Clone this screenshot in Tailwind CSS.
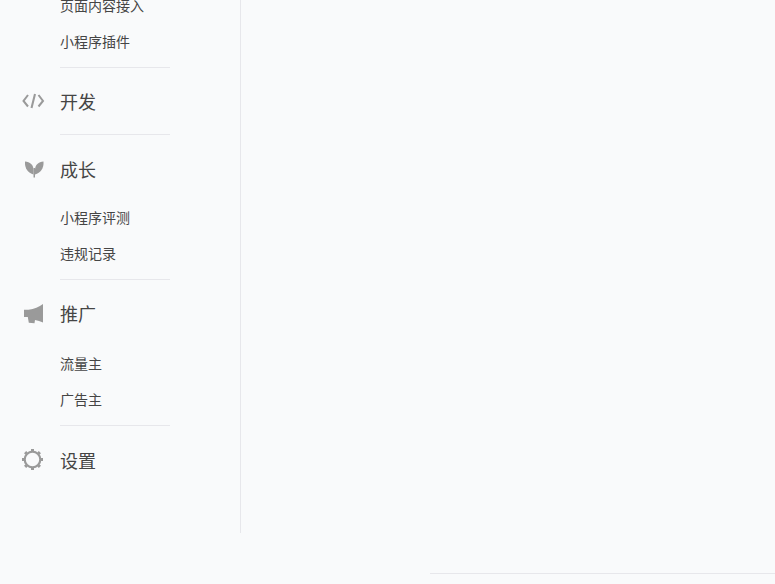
<!DOCTYPE html>
<html lang="zh">
<head>
<meta charset="utf-8">
<script src="https://cdn.jsdelivr.net/npm/@tailwindcss/browser@4"></script>
</head>
<body class="m-0 overflow-hidden bg-[#f9fafb] font-['Liberation_Sans','Noto_Sans_CJK_SC',sans-serif]">
<div class="w-[775px] h-[584px] flex flex-col">
  <aside class="w-[241px] h-[533px] shrink-0 border-r border-[#e7e7eb] flex flex-col justify-end overflow-hidden">
    <section class="shrink-0 pb-[7px]">
      <a class="block pl-[60px] h-[36px] leading-[36px] text-[14px] text-[#454545]">页面内容接入</a>
      <a class="block pl-[60px] h-[36px] leading-[36px] text-[14px] text-[#454545]">小程序插件</a>
    </section>
    <section class="shrink-0 ml-[60px] w-[110px] border-t border-[#e7e7eb]"></section>
    <section class="shrink-0 flex items-start h-[66px] text-[18px] leading-[24px] text-[#454545]">
      <svg class="w-[60px] h-[24px] shrink-0 mt-[21px]" viewBox="0 89 60 24" fill="none" stroke="#9a9a9a" stroke-width="2">
        <path d="M28 95 23.500 101l4.500 5.500"/><path d="M35 94 31.500 108"/><path d="M38.500 95l4.500 6-4.500 5.500"/>
      </svg>
      <span class="mt-[23px]">开发</span>
    </section>
    <section class="shrink-0 ml-[60px] w-[110px] border-t border-[#e7e7eb]"></section>
    <section class="shrink-0 flex items-start h-[65px] text-[18px] leading-[24px] text-[#454545]">
      <svg class="w-[60px] h-[24px] shrink-0 mt-[22px]" viewBox="0 157 60 24" fill="#9a9a9a">
        <path d="M25 161.500c5 .3 8.500 3.500 8.500 8V174.500c-5.500-1.500-9-6-8.500-13Z"/><path d="M43.500 161.500c-5 .3-8.500 3.500-8.500 8V174.500c5.500-1.500 9-6 8.500-13Z"/><rect x="33.500" y="168" width="1.500" height="9.500"/>
      </svg>
      <span class="mt-[24px]">成长</span>
    </section>
    <section class="shrink-0 pb-[7px]">
      <a class="block pl-[60px] h-[36px] leading-[36px] text-[14px] text-[#454545]">小程序评测</a>
      <a class="block pl-[60px] h-[36px] leading-[36px] text-[14px] text-[#454545]">违规记录</a>
    </section>
    <section class="shrink-0 ml-[60px] w-[110px] border-t border-[#e7e7eb]"></section>
    <section class="shrink-0 flex items-start h-[66px] text-[18px] leading-[24px] text-[#454545]">
      <svg class="w-[60px] h-[24px] shrink-0 mt-[21px]" viewBox="0 301 60 24" fill="#9a9a9a">
        <path d="M24 309.800h4.500Q37 308.500 43 304v18.500Q39 320.500 35 320l-.5 3.200-5.700-.4-1-5.800H24Z"/>
      </svg>
      <span class="mt-[23px]">推广</span>
    </section>
    <section class="shrink-0 pb-[7px]">
      <a class="block pl-[60px] h-[36px] leading-[36px] text-[14px] text-[#454545]">流量主</a>
      <a class="block pl-[60px] h-[36px] leading-[36px] text-[14px] text-[#454545]">广告主</a>
    </section>
    <section class="shrink-0 ml-[60px] w-[110px] border-t border-[#e7e7eb]"></section>
    <section class="shrink-0 flex items-start h-[70px] mb-[37px] text-[18px] leading-[24px] text-[#454545]">
      <svg class="w-[60px] h-[24px] shrink-0 mt-[22px]" viewBox="0 448 60 24" fill="none" stroke="#9a9a9a">
        <circle cx="32.500" cy="459.500" r="7.800" stroke-width="2.200"/>
        <path stroke-width="3" d="M32.500 449v2M32.500 468v2M22 459.500h2M41 459.500h2M25.100 452.100l1.500 1.500M38.400 465.400l1.500 1.500M25.100 466.900l1.500-1.500M38.400 453.600l1.500-1.500"/>
      </svg>
      <span class="mt-[24px]">设置</span>
    </section>
  </aside>
  <footer class="mt-[40px] ml-[430px] border-t border-[#e7e7eb] flex-1"></footer>
</div>
</body>
</html>
